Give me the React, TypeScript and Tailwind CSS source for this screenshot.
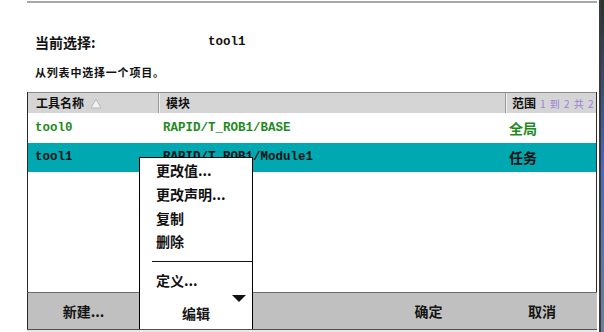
import React from "react";

const cjk = { fontFamily: '"Noto Sans CJK SC", "Noto Sans", sans-serif' };
const mono = { fontFamily: '"Liberation Mono", "DejaVu Sans Mono", monospace' };

function SortUp() {
  return (
    <svg width="12" height="11" viewBox="0 0 12 11" className="ml-[6px]">
      <polygon points="6,1 11,10 1,10" fill="#f2f2f2" stroke="#b5b5b5" strokeWidth="1" />
    </svg>
  );
}

export default function App() {
  const menuItems = ["更改值...", "更改声明...", "复制", "删除"];
  return (
    <div className="relative w-[604px] h-[332px] bg-white overflow-hidden flex" style={cjk}>
      <div className="w-[27px] shrink-0" />
      <div className="w-[570px] shrink-0 flex flex-col">
        <div className="mt-[1px] h-[2px] bg-[#a8a8a8]" />
        <div className="mt-[28px] h-[22px] flex items-center pl-[8px]">
          <div className="w-[173px] text-[14px] font-bold text-[#111]">当前选择:</div>
          <div className="text-[12.5px] font-bold text-[#111]" style={mono}>tool1</div>
        </div>
        <div className="mt-[10px] h-[18px] flex items-center pl-[8px] text-[11px] font-bold tracking-[0.8px] text-[#111]">
          从列表中选择一个项目。
        </div>
        <div className="mt-[11px] flex-1 flex flex-col border-l border-r border-[#2a2a2a]">
          {/* header */}
          <div className="h-[21px] flex bg-[#d5d5d5] border-t border-[#8a8a8a] text-[12px] font-bold text-[#111]">
            <div className="w-[131px] flex items-center pl-[8px] border-r border-[#9a9a9a]">
              工具名称
              <SortUp />
            </div>
            <div className="w-[347px] flex items-center pl-[6px] border-r border-[#9a9a9a] border-l border-l-[#f0f0f0]">模块</div>
            <div className="flex-1 flex items-center pl-[5px] border-l border-l-[#f0f0f0] whitespace-nowrap overflow-hidden">
              范围
              <span className="ml-[4px] text-[10px] font-normal tracking-[1px] text-[#9a80d8]">1 到 2 共 2</span>
            </div>
          </div>
          {/* row 1 */}
          <div className="h-[30px] flex items-center text-[#1e8a1e]">
            <div className="w-[131px] pl-[7px] text-[12.5px] font-bold" style={mono}>tool0</div>
            <div className="w-[349px] pl-[4px] text-[12.5px] font-bold" style={mono}>RAPID/T_ROB1/BASE</div>
            <div className="flex-1 pl-[1px] text-[14px] font-bold">全局</div>
          </div>
          {/* row 2 */}
          <div className="h-[29px] flex items-center bg-[#00a8b2] text-[#111]">
            <div className="w-[131px] pl-[7px] text-[12.5px] font-bold" style={mono}>tool1</div>
            <div className="w-[349px] pl-[4px] text-[12.5px] font-bold" style={mono}>RAPID/T_ROB1/Module1</div>
            <div className="flex-1 pl-[1px] text-[14px] font-bold">任务</div>
          </div>
          <div className="flex-1" />
        </div>
        {/* toolbar */}
        <div className="h-[38px] grid grid-cols-[112px_114px_117px_117px_110px] bg-[#c0c0c0] border-b border-[#505050] text-[14px] font-bold text-[#151515]">
          <div className="flex items-center justify-center border-t border-[#6a6a6a] border-l border-l-[#2a2a2a]">新建...</div>
          <div className="relative bg-white border-l border-r border-black flex items-center justify-center">
            <span className="pt-[6px]">编辑</span>
            <svg width="14" height="7" viewBox="0 0 14 7" className="absolute right-[6px] top-[3px]">
              <polygon points="0,0 14,0 7,7" fill="#111" />
            </svg>
            <div className="absolute bottom-full left-[-1px] right-[-1px] h-[135px] bg-white border-t border-l border-r border-black flex flex-col pt-[1px]">
              {menuItems.map((t) => (
                <div key={t} className="h-[24px] flex items-center pl-[16px] text-[14px] font-bold text-[#111]">
                  {t}
                </div>
              ))}
              <div className="mt-[8px] ml-[12px] h-[1px] bg-[#111]" />
              <div className="h-[30px] flex items-center pl-[16px] pt-[6px] text-[14px] font-bold text-[#111]">定义...</div>
            </div>
          </div>
          <div className="border-t border-[#6a6a6a]" />
          <div className="flex items-center justify-center border-t border-[#6a6a6a]">确定</div>
          <div className="flex items-center justify-center border-t border-[#6a6a6a]">取消</div>
        </div>
        <div className="h-[2px] bg-[#e8e8e8]" />
      </div>
      <div className="w-[2px] shrink-0" />
      <div className="w-[2px] shrink-0 bg-[#3a3a3a]" />
      <div className="w-[3px] shrink-0 bg-gradient-to-b from-[#2e2e2e] via-[#4a68b8] to-[#6f7f9a]" />
    </div>
  );
}
